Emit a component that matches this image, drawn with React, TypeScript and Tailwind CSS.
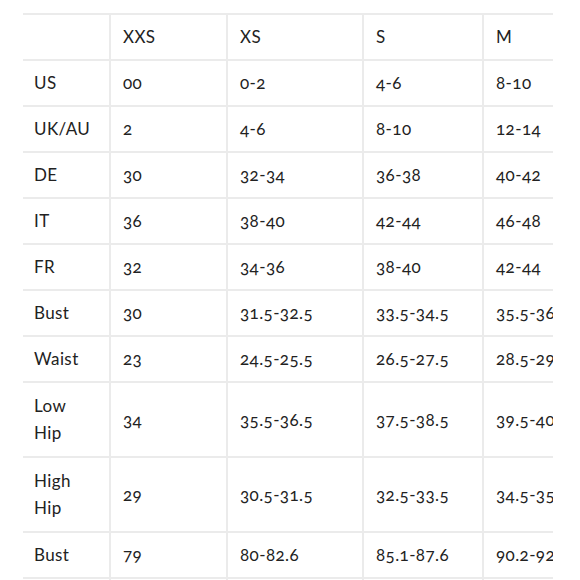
import React from "react";

const rows: string[][] = [
  ["", "XXS", "XS", "S", "M", "L"],
  ["US", "00", "0-2", "4-6", "8-10", "12-14"],
  ["UK/AU", "2", "4-6", "8-10", "12-14", "16-18"],
  ["DE", "30", "32-34", "36-38", "40-42", "44-46"],
  ["IT", "36", "38-40", "42-44", "46-48", "50-52"],
  ["FR", "32", "34-36", "38-40", "42-44", "46-48"],
  ["Bust", "30", "31.5-32.5", "33.5-34.5", "35.5-36.5", "37.5-38.5"],
  ["Waist", "23", "24.5-25.5", "26.5-27.5", "28.5-29.5", "30.5-31.5"],
  ["Low\nHip", "34", "35.5-36.5", "37.5-38.5", "39.5-40.5", "41.5-42.5"],
  ["High\nHip", "29", "30.5-31.5", "32.5-33.5", "34.5-35.5", "36.5-37.5"],
  ["Bust", "79", "80-82.6", "85.1-87.6", "90.2-92.7", "95.3-97.8"],
  ["Waist", "58", "62-65", "67-70", "72-75", "77-80"],
];

const widths = ["w-[87px]", "w-[117px]", "w-[136px]", "w-[120px]", "w-[130px]", "w-[130px]"];

export default function App() {
  return (
    <div className="w-[580px] h-[580px] overflow-hidden bg-white">
      <div className="ml-[23px] mt-[13px] w-[530px] overflow-hidden">
        <table className="table-fixed border-collapse w-[720px] text-[17px] tracking-[0.4px] leading-[27px] text-[#222] [font-family:Lato,'Open_Sans',sans-serif] [font-variant-numeric:oldstyle-nums]">
          <colgroup>
            {widths.map((w, i) => (
              <col key={i} className={w} />
            ))}
          </colgroup>
          <tbody>
            {rows.map((r, ri) => {
              const tall = r[0].includes("\n");
              return (
                <tr key={ri} className="border-t-2 border-b-2 border-[#ebebeb]">
                  {r.map((c, ci) => (
                    <td
                      key={ci}
                      className={
                        "align-middle text-left whitespace-pre-line " +
                        (tall ? "pt-[9px] pb-[10px] " : "pt-[8px] pb-[9px] ") +
                        (ci === 0 ? "pl-[11px] pr-[4px]" : "px-[12px] border-l-2 border-[#ebebeb]")
                      }
                    >
                      {c}
                    </td>
                  ))}
                </tr>
              );
            })}
          </tbody>
        </table>
      </div>
    </div>
  );
}
